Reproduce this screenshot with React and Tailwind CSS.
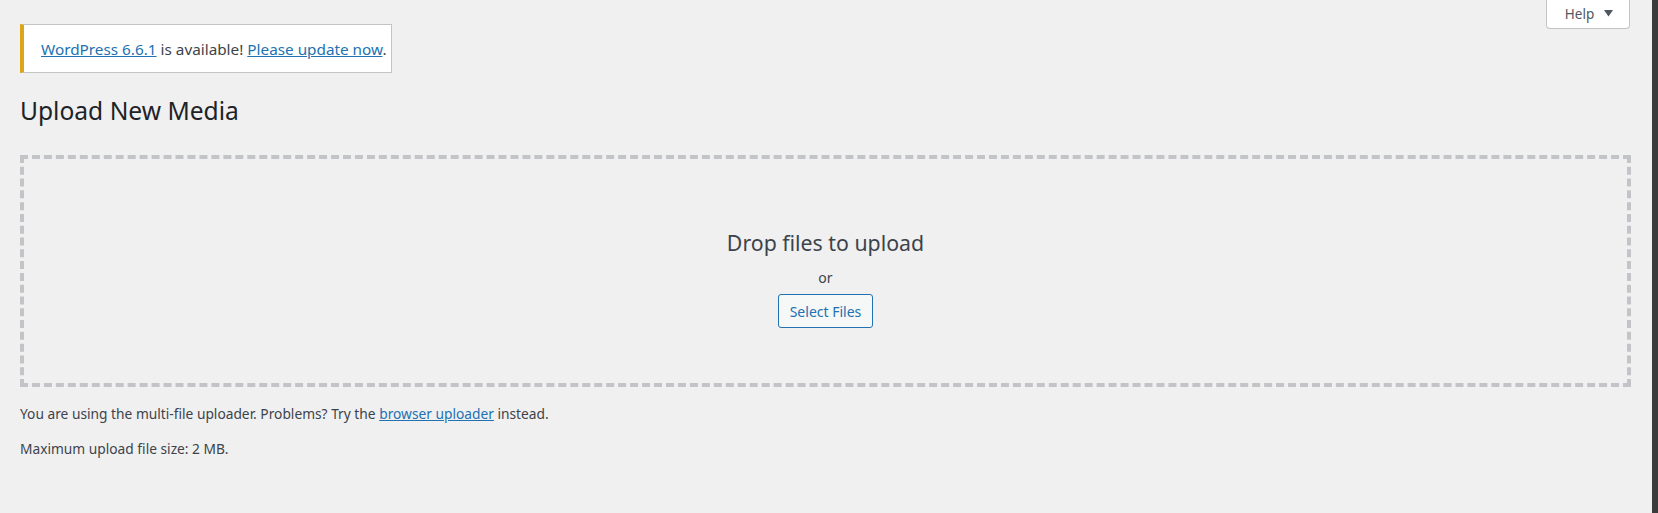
import React from "react";

const font = { fontFamily: '"Noto Sans", "Open Sans", sans-serif' };

const HelpTab = () => (
  <button className="flex h-[29px] w-[84px] items-center justify-center gap-[10px] rounded-b-[4px] border border-t-0 border-[#c3c4c7] bg-white pl-[2px] text-[13.5px] text-[#50575e]">
    <span>Help</span>
    <svg width="9" height="7" viewBox="0 0 9 7" className="mt-[-1px]">
      <polygon points="0,0 9,0 4.5,6.5" fill="#50575e" />
    </svg>
  </button>
);

export default function App() {
  return (
    <div className="flex min-h-[513px] w-full bg-[#f0f0f1]" style={font}>
      <div className="flex-1 pl-[20px] pr-[21px]">
        <div className="flex items-start">
          <div className="mt-[24px] flex h-[49px] w-[372px] items-center whitespace-nowrap border border-l-4 border-[#c3c4c7] border-l-[#dba617] bg-white pl-[17px] pt-[2px] text-[15.3px] text-[#3c434a]">
            <p className="whitespace-nowrap">
              <a href="#" className="text-[#2271b1] underline">WordPress 6.6.1</a> is available!{" "}
              <a href="#" className="text-[#2271b1] underline">Please update now</a>.
            </p>
          </div>
          <div className="ml-auto mr-[1px]">
            <HelpTab />
          </div>
        </div>

        <h1 className="mt-[22px] h-[32px] text-[24.6px] leading-[32px] text-[#1d2327]">Upload New Media</h1>

        <div className="mt-[28px] flex h-[232px] flex-col items-center border-4 border-dashed border-[#c3c4c7] pt-[68px]">
          <p className="h-[32px] text-[21.3px] leading-[32px] text-[#3c434a]">Drop files to upload</p>
          <p className="mt-[9px] h-[20px] text-[14px] leading-[20px] text-[#3c434a]">or</p>
          <button className="mt-[6px] h-[34px] w-[95px] rounded-[3px] border border-[#2271b1] bg-[#f6f7f7] text-[14px] text-[#2271b1]">
            Select Files
          </button>
        </div>

        <p className="mt-[17px] h-[20px] text-[13.75px] leading-[20px] text-[#3c434a]">
          You are using the multi-file uploader. Problems? Try the{" "}
          <a href="#" className="text-[#2271b1] underline">browser uploader</a> instead.
        </p>
        <p className="mt-[15px] h-[20px] text-[13.75px] leading-[20px] text-[#3c434a]">Maximum upload file size: 2 MB.</p>
      </div>
      <div className="w-[6px] shrink-0 bg-[#3b3b3b]" />
    </div>
  );
}
